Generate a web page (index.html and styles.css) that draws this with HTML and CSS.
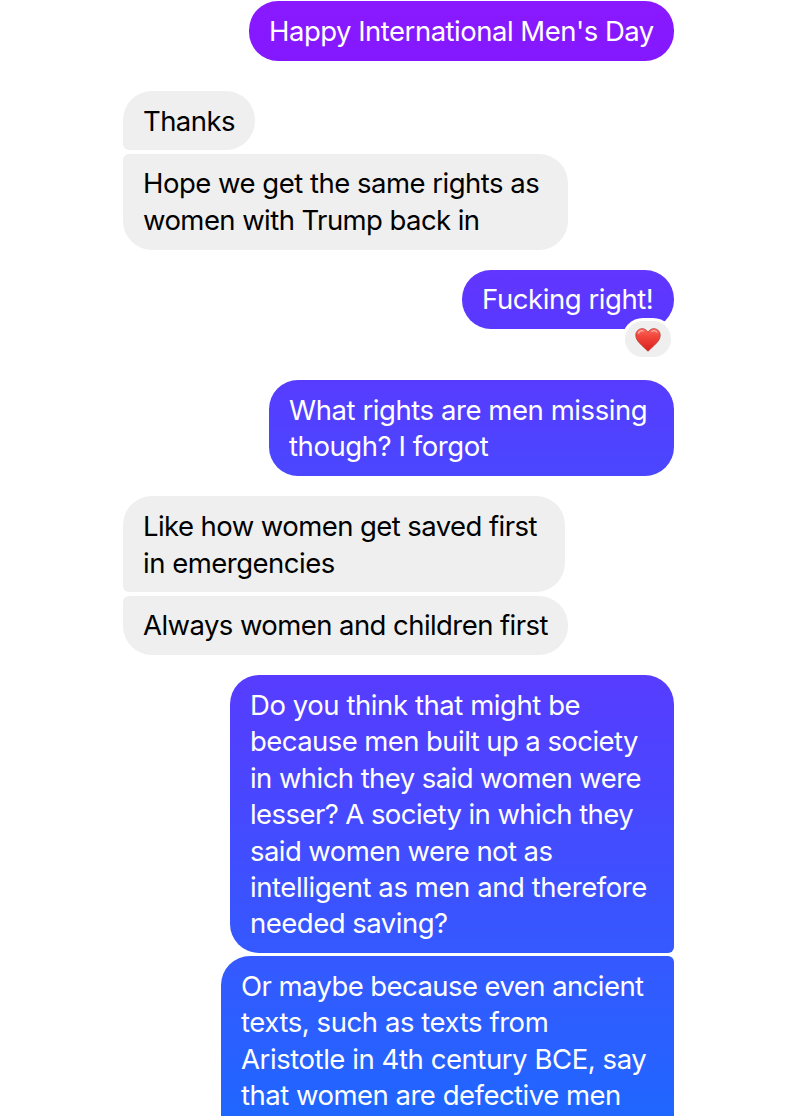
FILE: index.html
```
<!DOCTYPE html>
<html lang="en">
<head>
    <meta charset="utf-8">
    <title>Chat</title>
    <link rel="stylesheet" href="styles.css">
</head>
<body>
    <main class="chat">
        <div class="message sent purple w-425">
            <span>Happy International Men's Day</span>
        </div>

        <div class="group received-group">
            <div class="message received first w-132">
                <span class="tight">Thanks</span>
            </div>
            <div class="message received last w-445">
                <span>Hope we get the same rights as</span>
                <span class="tight">women with Trump back in</span>
            </div>
        </div>

        <div class="message sent violet w-212">
            <span class="loose">Fucking right!</span>
            <div class="reaction">
                <svg width="26" height="24" viewBox="0 0 26 24">
                    <defs>
                        <linearGradient id="heart" x1="0" y1="0" x2="0" y2="1">
                            <stop offset="0" stop-color="#ff6b5e"/>
                            <stop offset="0.35" stop-color="#f2453c"/>
                            <stop offset="1" stop-color="#d81f1c"/>
                        </linearGradient>
                    </defs>
                    <path d="M13 4.4C14.3 1.8 16.6.6 19 .7c3.7.1 6.2 2.9 6.2 6.6 0 6-6.6 10.2-12.2 16C7.4 17.5.8 13.3.8 7.3.8 3.6 3.3.8 7 .7c2.4-.1 4.7 1.1 6 3.7z" fill="url(#heart)" stroke="#b8392f" stroke-width="0.8"/>
                    <path d="M3.5 5.2C4.3 3.2 6 2.5 8 2.8M16.8 3.4c1.5-.9 3.7-.8 5 .7" fill="none" stroke="#ffb0a4" stroke-width="1.2" stroke-linecap="round"/>
                </svg>
            </div>
        </div>

        <div class="message sent indigo w-405">
            <span class="loose">What rights are men missing</span>
            <span class="loose">though? I forgot</span>
        </div>

        <div class="group received-group">
            <div class="message received first w-442">
                <span class="tight">Like how women get saved first</span>
                <span>in emergencies</span>
            </div>
            <div class="message received last w-445">
                <span class="tight">Always women and children first</span>
            </div>
        </div>

        <div class="group sent-group">
            <div class="message sent first blue w-444">
                <span class="loose">Do you think that might be</span>
                <span class="tight">because men built up a society</span>
                <span class="tight">in which they said women were</span>
                <span class="tight">lesser? A society in which they</span>
                <span class="tight">said women were not as</span>
                <span class="loose">intelligent as men and therefore</span>
                <span>needed saving?</span>
            </div>
            <div class="message sent cut bright w-453">
                <span class="tight">Or maybe because even ancient</span>
                <span class="loose">texts, such as texts from</span>
                <span class="loose">Aristotle in 4th century BCE, say</span>
                <span>that women are defective men</span>
            </div>
        </div>
    </main>
</body>
</html>
```
FILE: styles.css
```
* {
    box-sizing: border-box;
}
body {
    margin: 0;
    background-color: #ffffff;
    overflow: hidden;
}
.chat {
    display: flex;
    flex-direction: column;
    height: 1116px;
    padding: 1px 126px 0 123px;
    overflow: hidden;
    font-family: Inter, "Open Sans", sans-serif;
    font-size: 27.5px;
    line-height: 36.4px;
    letter-spacing: -0.5px;
}
.message {
    position: relative;
    flex-shrink: 0;
    padding: 11.6px 0 11.6px 20px;
    border-radius: 29px;
    white-space: nowrap;
}
.message span {
    display: block;
}
.message .tight {
    letter-spacing: -0.57px;
}
.message .loose {
    letter-spacing: -0.43px;
}

/* Groups of bubbles by one person */
.group {
    display: flex;
    flex-direction: column;
    flex-shrink: 0;
    gap: 3.5px;
}
.received-group {
    margin: 30px 0 20px;
}
.sent-group {
    gap: 3px;
}
.indigo + .received-group {
    margin-top: 20px;
}
.received {
    align-self: flex-start;
    background-color: #efefef;
    color: #000000;
}
.received.first {
    padding-top: 12.1px;
    padding-bottom: 11.1px;
    border-bottom-left-radius: 6px;
}
.received.last {
    border-top-left-radius: 6px;
}
.sent {
    align-self: flex-end;
    color: #ffffff;
}
.sent.first {
    border-bottom-right-radius: 6px;
}
.sent.cut {
    height: 190px;
    border-top-right-radius: 6px;
}

/* Bubble colors get bluer further down the chat */
.purple {
    background: linear-gradient(#8a19ff, #8318ff);
}
.violet {
    margin-bottom: 51px;
    background: linear-gradient(#6236ff, #5838ff);
}
.indigo {
    background: linear-gradient(#573cff, #4a47ff);
}
.blue {
    background: linear-gradient(#573cff, #4a46ff 40%, #3459ff);
}
.bright {
    background: linear-gradient(#3659ff, #1f66ff 160px);
}

/* Bubble widths */
.w-132 { width: 132px; }
.w-212 { width: 212px; }
.w-405 { width: 405px; }
.w-425 { width: 425px; }
.w-442 { width: 442px; }
.w-444 { width: 444px; }
.w-445 { width: 445px; }
.w-453 { width: 453px; }

.reaction {
    position: absolute;
    right: 3px;
    bottom: -28px;
    display: flex;
    align-items: center;
    justify-content: center;
    width: 46px;
    height: 36px;
    padding-top: 1px;
    border-radius: 18px;
    background-color: #efefef;
    box-shadow: 0 0 0 3px #ffffff;
}
```
